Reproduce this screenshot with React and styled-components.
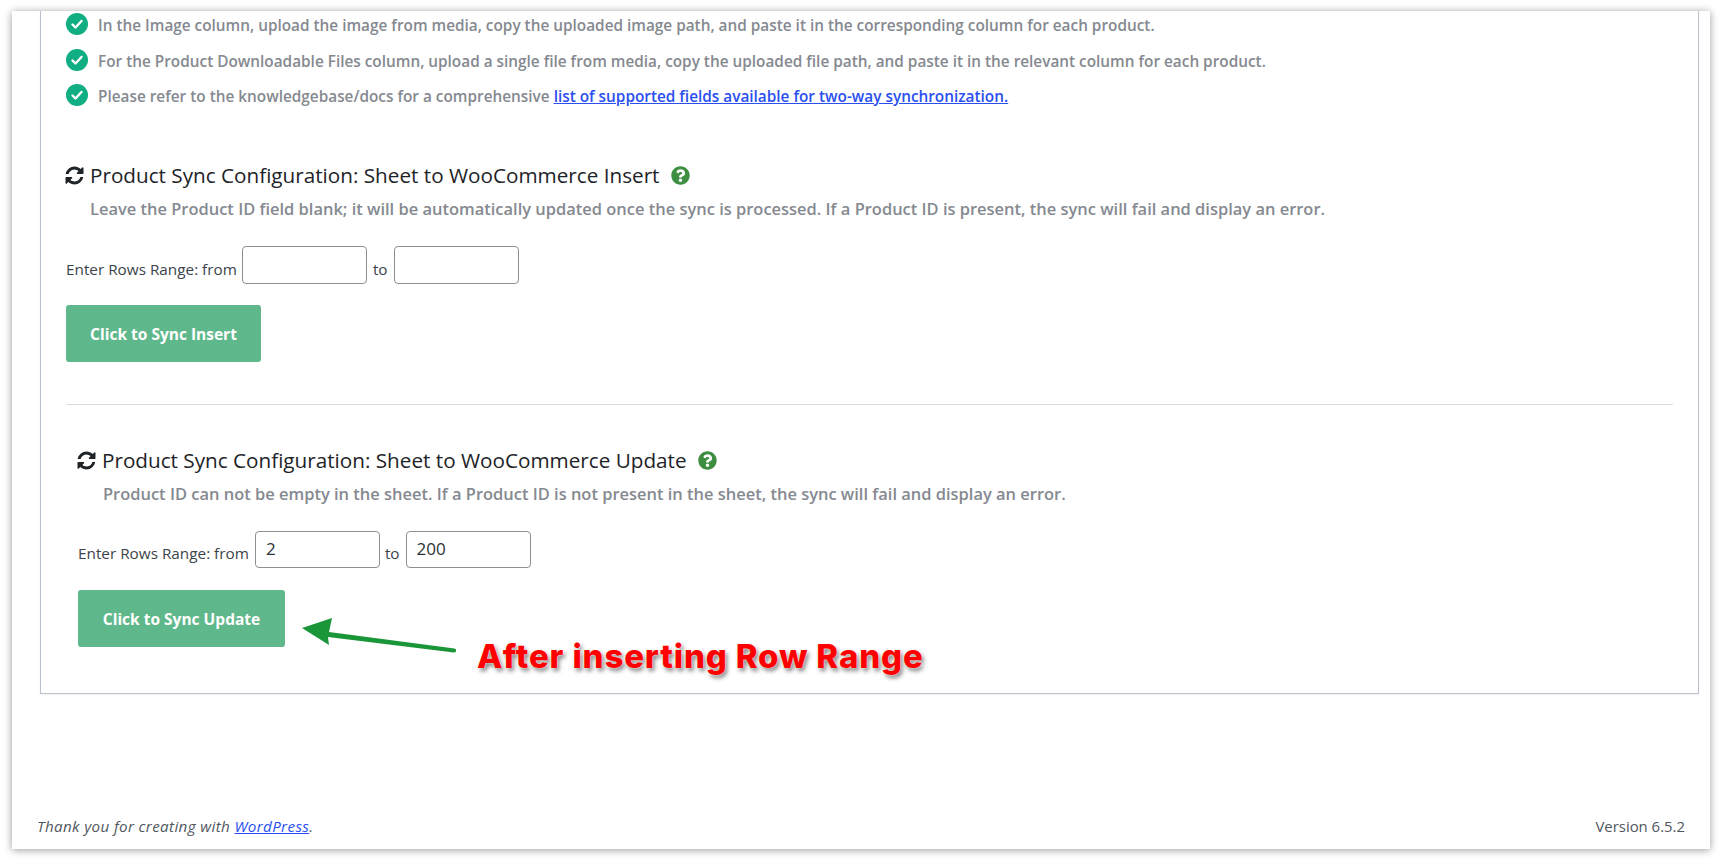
import React from "react";
import styled, { createGlobalStyle } from "styled-components";
import { FaQuestionCircle } from "react-icons/fa";

const GlobalStyle = createGlobalStyle`
  html, body, #root {
    height: 100%;
  }
  body {
    margin: 0;
    padding: 0;
    background: #fff;
    font-family: "Open Sans", "Noto Sans", sans-serif;
  }
  #root {
    box-sizing: border-box;
    padding: 11px 0 0 12px;
  }
`;

const Frame = styled.div`
  display: flex;
  flex-direction: column;
  justify-content: space-between;
  box-sizing: border-box;
  width: 1698px;
  height: 838px;
  background: #fff;
  box-shadow: 0 1px 8px rgba(0, 0, 0, 0.4);
`;

const Panel = styled.div`
  position: relative;
  box-sizing: border-box;
  width: 1659px;
  height: 683px;
  margin-left: 28px;
  padding: 2px 25px 0 25px;
  border: 1px solid #b9c2cc;
  border-top: none;
  box-shadow: 0 1px 2px rgba(0, 0, 0, 0.06);
`;

const Checklist = styled.ul`
  display: flex;
  flex-direction: column;
  gap: 13.5px;
  margin: 0;
  padding: 0;
  list-style: none;
`;

const CheckRow = styled.li`
  display: flex;
  align-items: center;
  gap: 10px;
  height: 22px;
`;

const CheckText = styled.span`
  padding-top: 2px;
  font-size: 15.35px;
  font-weight: 600;
  color: #858990;
  white-space: nowrap;
`;

const DocLink = styled.a`
  color: #2a4ff0;
  text-decoration: underline;
`;

const Section = styled.section`
  margin-top: ${(p) => p.$top}px;
  padding-left: ${(p) => p.$indent || 0}px;
`;

const Heading = styled.h2`
  display: flex;
  align-items: center;
  height: 28px;
  margin: 0;
  font-size: 20.7px;
  font-weight: 500;
  color: #1d2327;
  white-space: nowrap;
`;

const SyncDrawing = styled.svg`
  flex-shrink: 0;
  width: 21px;
  height: 21px;
  margin: 0 5px 0 -2px;
  fill: #1d2327;
`;

const HelpIcon = styled(FaQuestionCircle)`
  width: 19px;
  height: 19px;
  margin-left: 11px;
  color: #3e8e41;
`;

const Description = styled.p`
  margin: 8px 0 0;
  padding-left: ${(p) => p.$indent}px;
  font-size: 16.47px;
  line-height: 24px;
  font-weight: 600;
  color: #858990;
  white-space: nowrap;
`;

const RangeRow = styled.div`
  display: flex;
  align-items: center;
  margin-top: 25px;
`;

const RangeLabel = styled.label`
  padding-top: 7px;
  margin-left: ${(p) => p.$before || 0}px;
  margin-right: ${(p) => p.$gap}px;
  font-size: 15.3px;
  color: #3c434a;
  white-space: nowrap;
`;

const RangeInput = styled.input`
  box-sizing: border-box;
  width: 125px;
  height: ${(p) => p.$height}px;
  padding: 0 10px 2px;
  border: 1px solid #8c8f94;
  border-radius: 4px;
  background: #fff;
  font-family: inherit;
  font-size: 17px;
  color: #2c3338;
  outline: none;
`;

const SyncButton = styled.button`
  display: block;
  box-sizing: border-box;
  width: ${(p) => p.$width}px;
  height: 57px;
  margin-top: ${(p) => p.$top}px;
  padding: 0;
  border: none;
  border-radius: 3px;
  background: #5fb88c;
  font-family: inherit;
  font-size: 15.5px;
  font-weight: 700;
  color: #fff;
`;

const Divider = styled.hr`
  height: 1px;
  margin: 42px 0 0;
  border: none;
  background: #dcdcde;
`;

const Annotation = styled.div`
  position: absolute;
  left: 436px;
  top: 624px;
  font-family: Inter, "Open Sans", sans-serif;
  font-size: 33px;
  line-height: 42px;
  font-weight: 800;
  letter-spacing: 0.85px;
  color: #ff0000;
  white-space: nowrap;
  text-shadow: 0 0 2px #fff, 2px 3px 4px rgba(0, 0, 0, 0.5);
`;

const ArrowDrawing = styled.svg`
  position: absolute;
  left: 255px;
  top: 600px;
`;

const Footer = styled.footer`
  display: flex;
  justify-content: space-between;
  padding: 0 25px 13px 25px;
  line-height: 20px;
  color: #50575e;
`;

const Thanks = styled.span`
  font-size: 15.2px;
  letter-spacing: 0.36px;
  font-style: italic;
`;

const Version = styled.span`
  font-size: 14.9px;
`;

const FooterLink = styled.a`
  color: #2a4ff0;
  text-decoration: underline;
`;

const CheckMark = () => (
  <svg width="22" height="22" viewBox="0 0 22 22" style={{ flexShrink: 0 }}>
    <circle cx="11" cy="11" r="11" fill="#10ae82" />
    <path d="M6.5 11.500l3 3 6-6.500" fill="none" stroke="#fff" strokeWidth="2.4" strokeLinecap="round" strokeLinejoin="round" />
  </svg>
);

const SyncIcon = () => (
  <SyncDrawing viewBox="0 0 1792 1792">
    <path d="M1639 1056q0 5-1 7-64 268-268 434.500t-478 166.500q-146 0-282.500-55t-243.500-157l-129 129q-19 19-45 19t-45-19-19-45v-448q0-26 19-45t45-19h448q26 0 45 19t19 45-19 45l-137 137q71 66 161 102t187 36q134 0 250-65t186-179q11-17 53-117 8-23 30-23h192q13 0 22.500 9.500t9.500 22.500zm25-800v448q0 26-19 45t-45 19h-448q-26 0-45-19t-19-45 19-45l138-138q-148-137-349-137-134 0-250 65t-186 179q-11 17-53 117-8 23-30 23h-199q-13 0-22.500-9.500t-9.500-22.500v-7q65-268 270-434.500t480-166.500q146 0 284 55.500t245 156.500l130-129q19-19 45-19t45 19 19 45z" />
  </SyncDrawing>
);

const rows = [
  "In the Image column, upload the image from media, copy the uploaded image path, and paste it in the corresponding column for each product.",
  "For the Product Downloadable Files column, upload a single file from media, copy the uploaded file path, and paste it in the relevant column for each product.",
];

const App = () => (
  <>
    <GlobalStyle />
    <Frame>
      <Panel>
        <Checklist>
          {rows.map((row) => (
            <CheckRow key={row}>
              <CheckMark />
              <CheckText>{row}</CheckText>
            </CheckRow>
          ))}
          <CheckRow>
            <CheckMark />
            <CheckText>
              Please refer to the knowledgebase/docs for a comprehensive{" "}
              <DocLink href="#">list of supported fields available for two-way synchronization.</DocLink>
            </CheckText>
          </CheckRow>
        </Checklist>

        <Section $top={55}>
          <Heading>
            <SyncIcon />
            Product Sync Configuration: Sheet to WooCommerce Insert
            <HelpIcon />
          </Heading>
          <Description $indent={24}>
            Leave the Product ID field blank; it will be automatically updated once the sync is processed. If a Product ID is present, the sync will fail and display an error.
          </Description>
          <RangeRow>
            <RangeLabel $gap={5}>Enter Rows Range: from</RangeLabel>
            <RangeInput $height={38} />
            <RangeLabel $before={6} $gap={6}>to</RangeLabel>
            <RangeInput $height={38} />
          </RangeRow>
          <SyncButton $width={195} $top={21}>Click to Sync Insert</SyncButton>
        </Section>

        <Divider />

        <Section $top={41} $indent={12}>
          <Heading>
            <SyncIcon />
            Product Sync Configuration: Sheet to WooCommerce Update
            <HelpIcon />
          </Heading>
          <Description $indent={25}>
            Product ID can not be empty in the sheet. If a Product ID is not present in the sheet, the sync will fail and display an error.
          </Description>
          <RangeRow>
            <RangeLabel $gap={6}>Enter Rows Range: from</RangeLabel>
            <RangeInput $height={37} defaultValue="2" />
            <RangeLabel $before={5} $gap={6}>to</RangeLabel>
            <RangeInput $height={37} defaultValue="200" />
          </RangeRow>
          <SyncButton $width={207} $top={22}>Click to Sync Update</SyncButton>
        </Section>

        <ArrowDrawing width="170" height="60" viewBox="0 0 170 60">
          <path d="M6 17L36 7L33 21L158.500 37.500a2 2 0 0 1-.7 4L32 26L33 34Z" fill="#1a9639" />
        </ArrowDrawing>
        <Annotation>After inserting Row Range</Annotation>
      </Panel>
      <Footer>
        <Thanks>
          Thank you for creating with <FooterLink href="#">WordPress</FooterLink>.
        </Thanks>
        <Version>Version 6.5.2</Version>
      </Footer>
    </Frame>
  </>
);

export default App;
